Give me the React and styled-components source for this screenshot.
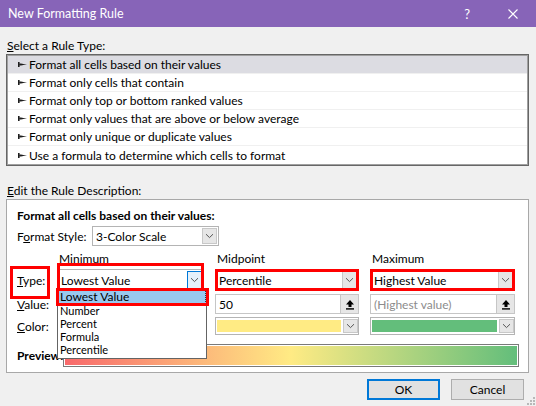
import React from 'react';
import styled, { createGlobalStyle, css } from 'styled-components';

const GlobalStyle = createGlobalStyle`
  html, body {
    margin: 0;
    padding: 0;
    background: #f0f0f0;
  }
  body {
    font-family: 'Segoe UI', Lato, 'Noto Sans', sans-serif;
    font-size: 12px;
    color: #000;
  }
`;

const ruleTypes = [
  'Format all cells based on their values',
  'Format only cells that contain',
  'Format only top or bottom ranked values',
  'Format only values that are above or below average',
  'Format only unique or duplicate values',
  'Use a formula to determine which cells to format',
];

const minOptions = ['Lowest Value', 'Number', 'Percent', 'Formula', 'Percentile'];

const Chevron = () => (
  <svg width="9" height="6" viewBox="0 0 9 6">
    <path d="M1 1.2 L4.5 4.6 L8 1.2" fill="none" stroke="#555" strokeWidth="1" />
  </svg>
);

const UploadArrow = () => (
  <svg width="10" height="11" viewBox="0 0 10 11">
    <path d="M5 1 L9 5.5 L6.5 5.5 L6.5 8 L3.5 8 L3.5 5.5 L1 5.5 Z" fill="#000" />
    <rect x="1" y="9.2" width="8" height="1.4" fill="#000" />
  </svg>
);

const RowMarker = () => (
  <svg width="9" height="7" viewBox="0 0 9 7">
    <rect x="0" y="1" width="1.6" height="5" fill="#1e1e1e" />
    <path d="M1.5 2.6 L9 3.5 L1.5 4.4 Z" fill="#1e1e1e" />
    <rect x="1.5" y="2.8" width="3" height="1.4" fill="#1e1e1e" />
  </svg>
);

const Dialog = () => (
  <Window>
    <TitleBar>
      <span>New Formatting Rule</span>
      <TitleButtons>
        <HelpGlyph>?</HelpGlyph>
        <svg width="10" height="10" viewBox="0 0 10 10">
          <path d="M0.5 0.5 L9.5 9.5 M9.5 0.5 L0.5 9.5" stroke="#fff" strokeWidth="1.1" />
        </svg>
      </TitleButtons>
    </TitleBar>

    <Body>
      <SectionLabel>
        <u>S</u>elect a Rule Type:
      </SectionLabel>
      <RuleList>
        {ruleTypes.map((rule, i) => (
          <RuleRow key={rule} $selected={i === 0}>
            <RowMarker />
            <span>{rule}</span>
          </RuleRow>
        ))}
      </RuleList>

      <SectionLabel $gap={17}>
        <u>E</u>dit the Rule Description:
      </SectionLabel>
      <DescBox>
        <BoldLine>Format all cells based on their values:</BoldLine>
        <StyleRow>
          <StyleLabel>
            F<u>o</u>rmat Style:
          </StyleLabel>
          <Combo $width={127} $height={20}>
            <ComboText>3-Color Scale</ComboText>
            <DropButton>
              <Chevron />
            </DropButton>
          </Combo>
        </StyleRow>

        <ScaleGrid>
          <span />
          <ColumnHead>Minimum</ColumnHead>
          <ColumnHead>Midpoint</ColumnHead>
          <ColumnHead>Maximum</ColumnHead>

          <RowLabel $framed>
            <u>T</u>ype:
          </RowLabel>
          <Cell>
            <Combo $frame="tall">
              <ComboText>Lowest Value</ComboText>
              <DropButton $focused>
                <Chevron />
              </DropButton>
            </Combo>
            <DropList>
              {minOptions.map((opt, i) => (
                <DropItem key={opt} $active={i === 0}>
                  {opt}
                </DropItem>
              ))}
            </DropList>
          </Cell>
          <Cell>
            <Combo $frame="normal">
              <ComboText>Percentile</ComboText>
              <DropButton>
                <Chevron />
              </DropButton>
            </Combo>
          </Cell>
          <Cell>
            <Combo $frame="normal">
              <ComboText>Highest Value</ComboText>
              <DropButton>
                <Chevron />
              </DropButton>
            </Combo>
          </Cell>

          <RowLabel>
            <u>V</u>alue:
          </RowLabel>
          <ValueBox>
            <ValueText />
            <SpinButton>
              <UploadArrow />
            </SpinButton>
          </ValueBox>
          <ValueBox>
            <ValueText>50</ValueText>
            <SpinButton>
              <UploadArrow />
            </SpinButton>
          </ValueBox>
          <ValueBox>
            <ValueText $muted>(Highest value)</ValueText>
            <SpinButton>
              <UploadArrow />
            </SpinButton>
          </ValueBox>

          <RowLabel>
            <u>C</u>olor:
          </RowLabel>
          <ColorPicker>
            <Swatch $color="#f8696b" />
            <DropButton>
              <Chevron />
            </DropButton>
          </ColorPicker>
          <ColorPicker>
            <Swatch $color="#ffeb84" />
            <DropButton>
              <Chevron />
            </DropButton>
          </ColorPicker>
          <ColorPicker>
            <Swatch $color="#63be7b" />
            <DropButton>
              <Chevron />
            </DropButton>
          </ColorPicker>
        </ScaleGrid>

        <PreviewRow>
          <PreviewLabel>Preview:</PreviewLabel>
          <PreviewBar>
            <Gradient />
          </PreviewBar>
        </PreviewRow>
      </DescBox>

      <Footer>
        <DialogButton $primary>OK</DialogButton>
        <DialogButton>Cancel</DialogButton>
      </Footer>
    </Body>

    <SizeGrip width="9" height="9" viewBox="0 0 9 9">
      {[
        [7, 1],
        [7, 4],
        [4, 4],
        [7, 7],
        [4, 7],
        [1, 7],
      ].map(([x, y]) => (
        <rect key={`${x}-${y}`} x={x} y={y} width="2" height="2" fill="#b8b8b8" />
      ))}
    </SizeGrip>
  </Window>
);

export default function App() {
  return (
    <>
      <GlobalStyle />
      <Dialog />
    </>
  );
}

const Window = styled.div`
  position: relative;
  width: 536px;
  height: 406px;
  background: #f0f0f0;
  overflow: hidden;
`;

const TitleBar = styled.div`
  height: 27px;
  background: #8764b8;
  color: #fff;
  display: flex;
  align-items: center;
  justify-content: space-between;
  padding: 0 18px 0 8px;
  font-size: 12.5px;
`;

const TitleButtons = styled.div`
  display: flex;
  align-items: center;
  gap: 38px;
`;

const HelpGlyph = styled.span`
  font-size: 13px;
`;

const Body = styled.div`
  padding: 0 7px 0 6px;
`;

const SectionLabel = styled.div`
  height: 16px;
  line-height: 16px;
  margin-top: ${({ $gap }) => $gap ?? 11}px;
  margin-bottom: 0;
  padding-left: 1px;
`;

const RuleList = styled.div`
  border: 1px solid #666;
  box-shadow: inset 0 0 0 1px #a0a0a0;
  background: #fff;
  padding: 1px;
`;

const RuleRow = styled.div`
  height: 18px;
  display: flex;
  align-items: center;
  gap: 2px;
  padding-left: 10px;
  border-bottom: 1px solid #f0f0f0;
  box-sizing: border-box;
  background: ${({ $selected }) => ($selected ? '#dcdce2' : '#fff')};

  &:last-child {
    border-bottom: none;
  }
`;

const DescBox = styled.div`
  border: 1px solid #a8a8a8;
  background: #fff;
  padding: 8px 9px 5px 10px;
`;

const BoldLine = styled.div`
  font-weight: bold;
  height: 16px;
  line-height: 16px;
`;

const StyleRow = styled.div`
  display: flex;
  align-items: center;
  margin-top: 2px;
`;

const StyleLabel = styled.span`
  flex: none;
  width: 75px;
  white-space: nowrap;
`;

const ScaleGrid = styled.div`
  display: grid;
  grid-template-columns: 29px 147px 144px 145px;
  grid-template-rows: 14px 22px 20px 18px;
  column-gap: 11px;
  row-gap: 3px;
  margin-top: 6px;
  align-items: center;
`;

const ColumnHead = styled.div`
  line-height: 14px;
  padding-left: 2px;
`;

const RowLabel = styled.div`
  position: relative;

  ${({ $framed }) =>
    $framed &&
    css`
      &::after {
        content: '';
        position: absolute;
        left: -7px;
        top: -7px;
        width: 40px;
        height: 33px;
        border: 3px solid #ff0000;
        box-sizing: border-box;
      }
    `}
`;

const Cell = styled.div`
  position: relative;
  height: 100%;
`;

const frames = {
  tall: css`
    top: -7px;
    bottom: -1px;
  `,
  normal: css`
    top: -1px;
    bottom: -1px;
  `,
};

const Combo = styled.div`
  position: relative;
  box-sizing: border-box;
  width: ${({ $width }) => ($width ? `${$width}px` : '100%')};
  height: ${({ $height }) => ($height ? `${$height}px` : '100%')};
  border: 1px solid #b4b4b4;
  background: #fff;
  display: flex;
  align-items: stretch;
  padding: 1px;

  ${({ $frame }) =>
    $frame &&
    css`
      &::after {
        content: '';
        position: absolute;
        left: -1px;
        right: -1px;
        border: 3px solid #ff0000;
        pointer-events: none;
        ${frames[$frame]}
      }
    `}
`;

const ComboText = styled.div`
  flex: 1;
  display: flex;
  align-items: center;
  padding-left: 2px;
  white-space: nowrap;
`;

const DropButton = styled.div`
  width: 15px;
  box-sizing: border-box;
  display: flex;
  align-items: center;
  justify-content: center;
  border: 1px solid ${({ $focused }) => ($focused ? '#0078d7' : '#c8c8c8')};
  background: ${({ $focused }) => ($focused ? '#e5f1fb' : '#e6e6e6')};
`;

const DropList = styled.div`
  position: absolute;
  left: 0;
  top: 20px;
  width: 148px;
  border: 1px solid #646464;
  background: #fff;
  z-index: 2;
  padding-bottom: 2px;
`;

const DropItem = styled.div`
  position: relative;
  height: 13px;
  line-height: 13px;
  font-size: 11px;
  padding-left: 2px;

  ${({ $active }) =>
    $active &&
    css`
      height: 14px;
      line-height: 14px;
      font-size: 12px;
      background: #99c9ef;
      outline: 1px dotted #333;
      outline-offset: -1px;

      &::after {
        content: '';
        position: absolute;
        left: -2px;
        right: -3px;
        top: -2px;
        bottom: -2px;
        border: 3px solid #ff0000;
      }
    `}
`;

const ValueBox = styled.div`
  height: 100%;
  box-sizing: border-box;
  border: 1px solid #c6c6c6;
  background: #fff;
  display: flex;
`;

const ValueText = styled.div`
  flex: 1;
  display: flex;
  align-items: center;
  padding-left: 3px;
  color: ${({ $muted }) => ($muted ? '#8c8c8c' : '#000')};
`;

const SpinButton = styled.div`
  width: 17px;
  display: flex;
  align-items: center;
  justify-content: center;
  border-left: 1px solid #c6c6c6;
  background: #e6e6e6;
`;

const ColorPicker = styled.div`
  height: 100%;
  box-sizing: border-box;
  border: 1px solid #b4b4b4;
  background: #fff;
  display: flex;
  gap: 2px;
  padding: 1px 0 1px 1px;
`;

const Swatch = styled.div`
  flex: 1;
  margin: 1px 0;
  background: ${({ $color }) => $color};
`;

const PreviewRow = styled.div`
  display: flex;
  align-items: center;
  margin-top: 9px;
`;

const PreviewLabel = styled.div`
  width: 46px;
  font-weight: bold;
`;

const PreviewBar = styled.div`
  flex: 1;
  height: 23px;
  box-sizing: border-box;
  border: 1px solid #7a7a7a;
  padding: 1px;
  background: #fff;
  display: flex;
`;

const Gradient = styled.div`
  flex: 1;
  background: linear-gradient(to right, #f8696b 0%, #ffeb84 50%, #63be7b 100%);
`;

const Footer = styled.div`
  display: flex;
  justify-content: flex-end;
  gap: 11px;
  margin-top: 6px;
  padding-right: 5px;
`;

const DialogButton = styled.div`
  width: 73px;
  height: 21px;
  box-sizing: border-box;
  display: flex;
  align-items: center;
  justify-content: center;
  background: #e1e1e1;
  border: ${({ $primary }) => ($primary ? '2px solid #0078d7' : '1px solid #adadad')};
`;

const SizeGrip = styled.svg`
  position: absolute;
  right: 1px;
  bottom: 1px;
`;
